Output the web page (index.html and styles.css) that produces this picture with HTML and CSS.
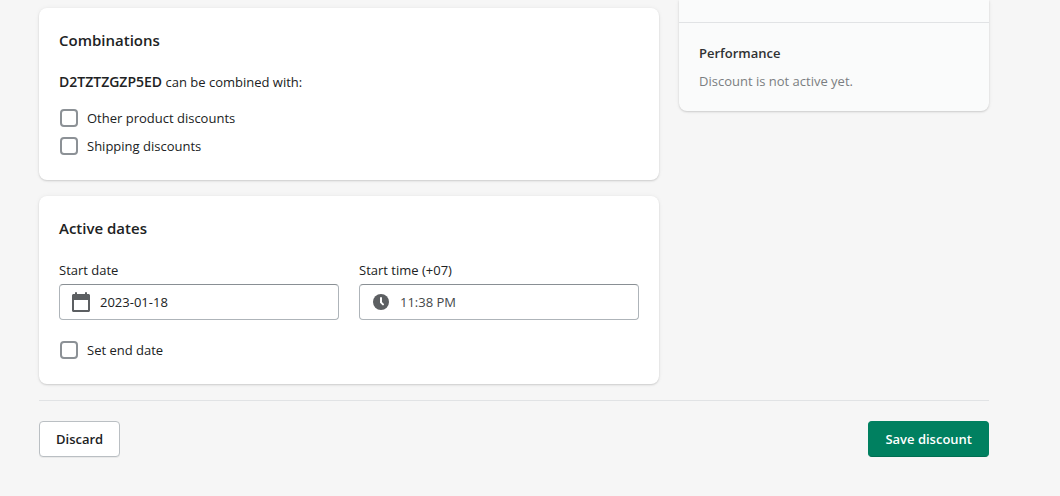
FILE: index.html
```html
<!DOCTYPE html>
<html lang="en">
<head>
<meta charset="utf-8">
<title>Discount</title>
<link rel="stylesheet" href="styles.css">
</head>
<body>
<div class="page">
  <form class="layout">
    <main class="primary">
      <section class="card">
        <h2 class="card-title">Combinations</h2>
        <p class="text"><strong>D2TZTZGZP5ED</strong> can be combined with:</p>
        <div class="choices">
          <label class="choice"><input type="checkbox" class="checkbox">Other product discounts</label>
          <label class="choice"><input type="checkbox" class="checkbox">Shipping discounts</label>
        </div>
      </section>
      <section class="card">
        <h2 class="card-title">Active dates</h2>
        <div class="fields">
          <div class="field">
            <label for="start-date">Start date</label>
            <div class="input-box">
              <svg class="icon" viewBox="0 0 20 20" aria-hidden="true"><path fill-rule="evenodd" d="M17.500 2H16V1a1 1 0 1 0-2 0v1H6V1a1 1 0 0 0-2 0v1H2.500C1.700 2 1 2.700 1 3.500v15c0 .8.7 1.500 1.500 1.500h15c.8 0 1.500-.7 1.500-1.500v-15c0-.8-.7-1.500-1.500-1.500zM3 18h14V8H3v10z"/></svg>
              <input type="text" class="input" id="start-date" value="2023-01-18">
            </div>
          </div>
          <div class="field">
            <label for="start-time">Start time (+07)</label>
            <div class="input-box">
              <svg class="icon" viewBox="0 0 20 20" aria-hidden="true"><circle cx="10" cy="10" r="8"/><path class="clock-hands" d="M10 6v4.400l2 2"/></svg>
              <input type="text" class="input input-muted" id="start-time" value="11:38 PM">
            </div>
          </div>
        </div>
        <label class="choice"><input type="checkbox" class="checkbox">Set end date</label>
      </section>
    </main>
    <aside class="card summary">
      <section class="performance">
        <h3 class="subheading">Performance</h3>
        <p class="text subdued">Discount is not active yet.</p>
      </section>
    </aside>
    <footer class="actions">
      <button type="button" class="button">Discard</button>
      <button type="button" class="button button-primary">Save discount</button>
    </footer>
  </form>
</div>
</body>
</html>
```
FILE: styles.css
```css
* {
  box-sizing: border-box;
}

body {
  margin: 0;
  background: #f6f6f6;
  color: #202223;
  font: 14px/20px "Open Sans", "Noto Sans", sans-serif;
}

h2, h3, p {
  margin: 0;
}

.page {
  padding: 0 71px 0 39px;
}

.layout {
  display: grid;
  grid-template-columns: 2fr 1fr;
  align-items: start;
  column-gap: 20px;
  row-gap: 16px;
}

.primary {
  display: flex;
  flex-direction: column;
  gap: 16px;
  padding-top: 8px;
}

.card {
  padding: 20px;
  background: #fff;
  border-radius: 8px;
  box-shadow: 0 0 5px rgba(23, 24, 24, 0.05), 0 1px 2px rgba(0, 0, 0, 0.15);
}

.card-title {
  margin-bottom: 20px;
  font-size: 15px;
  line-height: 24px;
  font-weight: 600;
}

.text,
.field,
.choice {
  font-size: 13px;
  line-height: 20px;
}

.text strong {
  font-size: 14px;
  line-height: 16px;
  font-weight: 600;
}

.choices {
  margin-top: 12px;
}

.choice {
  display: flex;
  align-items: center;
  gap: 8px;
  width: fit-content;
  padding: 4px 0;
}

.checkbox {
  appearance: none;
  width: 18px;
  height: 18px;
  margin: 1px;
  border: 2px solid #8c9196;
  border-radius: 4px;
  background: #fff;
}

.checkbox:checked {
  border-color: #008060;
  background: #008060;
}

.fields {
  display: grid;
  grid-template-columns: 1fr 1fr;
  gap: 20px;
  margin-bottom: 16px;
}

.field {
  display: flex;
  flex-direction: column;
  gap: 4px;
}

.input-box {
  display: flex;
  align-items: center;
  gap: 9px;
  height: 36px;
  padding: 0 11px;
  border: 1px solid #aeb4b9;
  border-top-color: #898f94;
  border-radius: 4px;
  background: #fff;
}

.icon {
  flex: none;
  width: 20px;
  height: 20px;
  fill: #5c5f62;
}

.clock-hands {
  fill: none;
  stroke: #fff;
  stroke-width: 2;
  stroke-linecap: round;
  stroke-linejoin: round;
}

.input {
  flex: 1;
  min-width: 0;
  padding: 0;
  border: 0;
  outline: 0;
  background: transparent;
  color: #202223;
  font: inherit;
}

.input-muted {
  color: #45484a;
}

.summary {
  padding: 22px 0 0;
  background: #fafbfb;
  border-radius: 0 0 8px 8px;
}

.performance {
  padding: 20px;
  border-top: 1px solid #e1e3e5;
}

.subheading {
  margin-bottom: 8px;
  color: #303233;
  font-size: 13px;
  line-height: 20px;
  font-weight: 600;
}

.subdued {
  color: #7b7e81;
}

.actions {
  grid-column: 1 / -1;
  display: flex;
  justify-content: space-between;
  padding: 20px 0;
  border-top: 1px solid #e1e3e5;
}

.button {
  height: 36px;
  padding: 0 16px;
  border: 1px solid #babfc3;
  border-radius: 4px;
  background: #fff;
  box-shadow: 0 1px 0 rgba(0, 0, 0, 0.05);
  color: #202223;
  font: 600 13px/20px "Open Sans", "Noto Sans", sans-serif;
}

.button-primary {
  border-color: #008060 #008060 #006e52;
  background: #008060;
  box-shadow: none;
  color: #fff;
}
```
